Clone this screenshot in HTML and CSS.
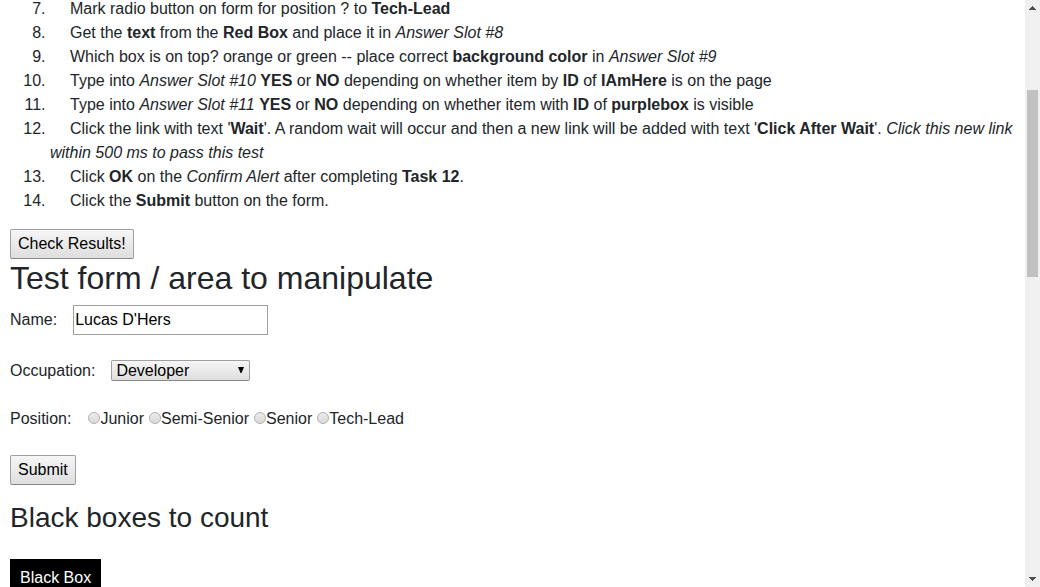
FILE: index.html
```html
<!DOCTYPE html>
<html lang="en">
<head>
<meta charset="utf-8">
<title>Test form</title>
<link rel="stylesheet" href="styles.css">
</head>
<body>
<div class="window">
  <main class="page">
    <ol class="tasks" start="7">
      <li>Mark radio button on form for position ? to <b>Tech-Lead</b></li>
      <li>Get the <b>text</b> from the <b>Red Box</b> and place it in <i>Answer Slot #8</i></li>
      <li>Which box is on top? orange or green -- place correct <b>background color</b> in <i>Answer Slot #9</i></li>
      <li>Type into <i>Answer Slot #10</i> <b>YES</b> or <b>NO</b> depending on whether item by <b>ID</b> of <b>IAmHere</b> is on the page</li>
      <li>Type into <i>Answer Slot #11</i> <b>YES</b> or <b>NO</b> depending on whether item with <b>ID</b> of <b>purplebox</b> is visible</li>
      <li>Click the link with text '<b>Wait</b>'. A random wait will occur and then a new link will be added with text '<b>Click After Wait</b>'. <i>Click this new link within 500 ms to pass this test</i></li>
      <li>Click <b>OK</b> on the <i>Confirm Alert</i> after completing <b>Task 12</b>.</li>
      <li>Click the <b>Submit</b> button on the form.</li>
    </ol>
    <button class="button" type="button">Check Results!</button>
    <h1 class="title">Test form / area to manipulate</h1>
    <form class="form">
      <div class="field">
        <label for="name">Name:</label>
        <input class="text-input" id="name" type="text" value="Lucas D'Hers">
      </div>
      <div class="field">
        <label for="occupation">Occupation:</label>
        <span class="select-wrap">
          <select class="select" id="occupation"><option>Developer</option></select>
          <svg class="select-arrow" width="6" height="6" viewBox="0 0 6 6" aria-hidden="true"><path d="M0 0h6L3.500 6h-1z"/></svg>
        </span>
      </div>
      <div class="field" role="radiogroup" aria-labelledby="position">
        <span id="position">Position:</span>
        <span class="options">
          <label class="option"><input class="radio" type="radio" name="position">Junior</label>
          <label class="option"><input class="radio" type="radio" name="position">Semi-Senior</label>
          <label class="option"><input class="radio" type="radio" name="position">Senior</label>
          <label class="option"><input class="radio" type="radio" name="position">Tech-Lead</label>
        </span>
      </div>
      <button class="button" type="button">Submit</button>
    </form>
    <h2 class="subtitle">Black boxes to count</h2>
    <div class="black-box">Black Box</div>
  </main>
  <div class="scrollbar" aria-hidden="true">
    <svg class="arrow" width="7" height="4" viewBox="0 0 7 4" shape-rendering="crispEdges"><path d="M3 0h1v1h1v1h1v1h1v1H0V3h1V2h1V1h1z"/></svg>
    <div class="track"><div class="thumb"></div></div>
    <svg class="arrow" width="7" height="4" viewBox="0 0 7 4" shape-rendering="crispEdges"><path d="M0 0h7v1H6v1H5v1H4v1H3V3H2V2H1V1H0z"/></svg>
  </div>
</div>
</body>
</html>
```
FILE: styles.css
```css
* { box-sizing: border-box; }

body {
  margin: 0;
  background: #fff;
  color: #212529;
  font: 16px/24px "Liberation Sans", Arial, sans-serif;
}

.window {
  display: flex;
  height: 100vh;
  overflow: hidden;
}

.page {
  flex: 1;
  min-width: 0;
  padding: 0 10px;
}

.tasks {
  margin: -3px 0 16px;
  padding-left: 40px;
  text-indent: 20px;
}

.button {
  display: block;
  height: 30px;
  padding: 0 7px;
  border: 1px solid #a0a0a0;
  border-bottom-color: #888;
  border-radius: 2px;
  background: linear-gradient(#f6f6f6, #dedede);
  color: #000;
  font: inherit;
}

.title {
  margin: 0 0 8px;
  font-size: 32px;
  line-height: 38px;
  font-weight: 400;
}

.field {
  display: flex;
  align-items: center;
  gap: 16px;
  margin-bottom: 24px;
}

.text-input {
  width: 195px;
  height: 30px;
  padding: 0 1px;
  border: 1px solid #a0a0a0;
  border-radius: 0;
  background: #fff;
  color: #000;
  font: inherit;
}

.select-wrap {
  position: relative;
  display: flex;
  padding-bottom: 2px;
}

.select {
  appearance: none;
  width: 139px;
  height: 21px;
  padding: 0 20px 0 4px;
  border: 1px solid #a0a0a0;
  border-bottom-color: #888;
  border-radius: 2px;
  background: linear-gradient(#f6f6f6, #dedede);
  color: #000;
  font: inherit;
  line-height: 19px;
}

.select-arrow {
  position: absolute;
  right: 6px;
  top: 7px;
  pointer-events: none;
}

.options {
  display: flex;
  gap: 4px;
}

.option {
  display: flex;
  align-items: center;
}

.radio {
  appearance: none;
  width: 12px;
  height: 12px;
  margin: 0 0 2px 1px;
  border: 1px solid #b0b0b0;
  border-radius: 50%;
  background: linear-gradient(#ececec, #dadada);
}

.subtitle {
  margin: 16px 0 24px;
  font-size: 28px;
  line-height: 34px;
  font-weight: 400;
}

.black-box {
  width: fit-content;
  padding: 7px 10px;
  background: #000;
  color: #fff;
}

.scrollbar {
  display: flex;
  flex-direction: column;
  align-items: center;
  width: 15px;
  padding: 6px 0;
  background: #f0f0f0;
}

.arrow { fill: #505050; }

.track {
  flex: 1;
  align-self: stretch;
  padding: 80px 2px 0;
}

.thumb {
  height: 187px;
  background: #c1c1c1;
}
```
